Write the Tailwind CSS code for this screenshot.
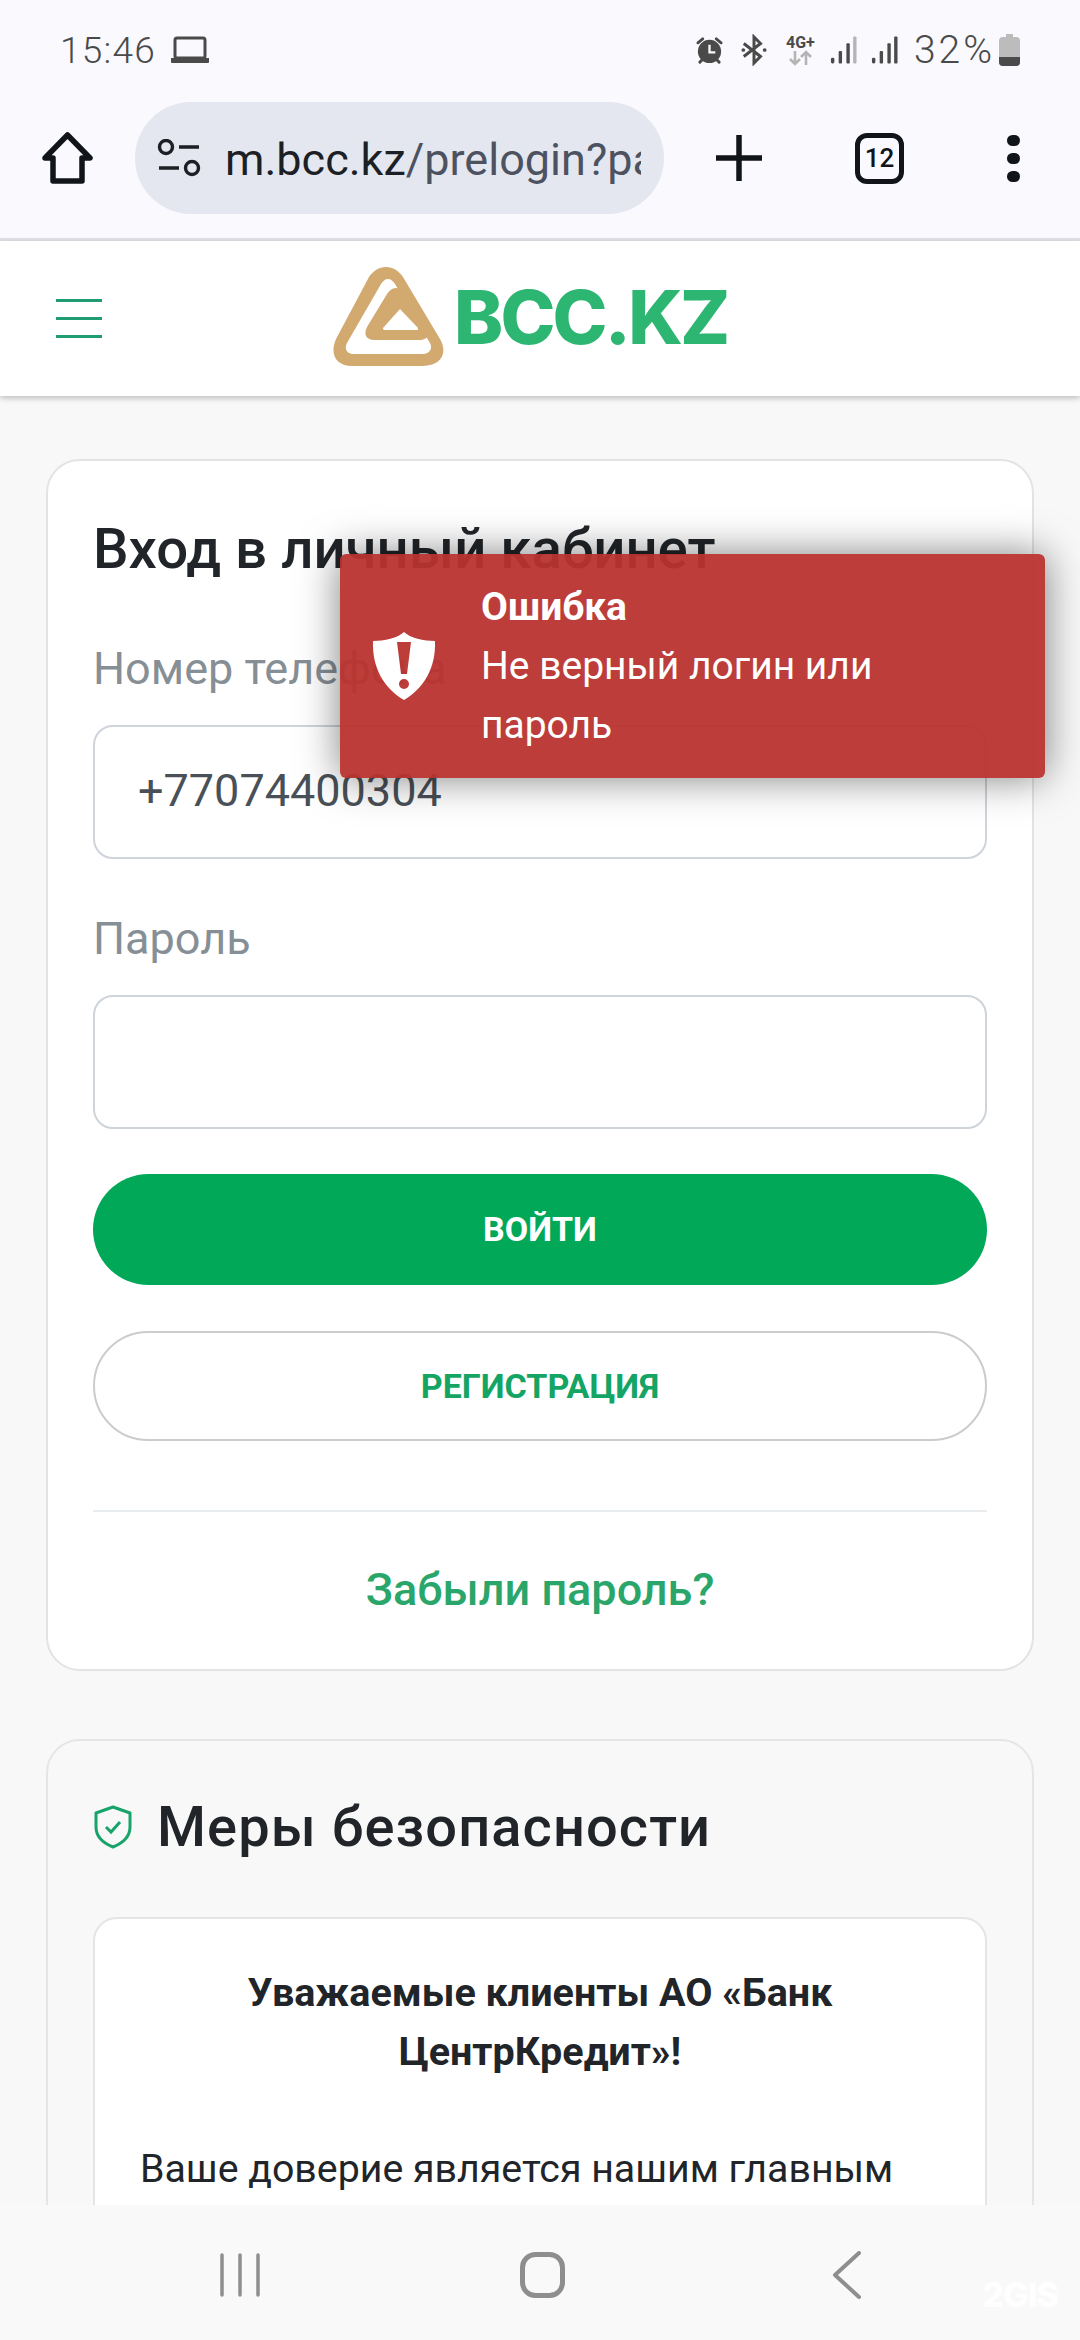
<!DOCTYPE html>
<html lang="ru">
<head>
<meta charset="utf-8">
<script src="https://cdn.jsdelivr.net/npm/@tailwindcss/browser@4"></script>
</head>
<body class="m-0">
<div class="relative w-[1080px] h-[2340px] overflow-hidden flex flex-col bg-[#f8f8f8] font-['Roboto',sans-serif]">
  <!-- status bar -->
  <div class="h-[90px] bg-[#f9f9fe] flex items-center justify-between pl-[60px] pr-[60px] pt-[10px] shrink-0 text-[#4a4a4a]">
    <div class="flex items-center gap-[14px]">
      <span class="text-[37px] font-light tracking-[1.2px] leading-none">15:46</span>
      <svg class="w-[40px] h-[28px]" viewBox="0 0 40 28"><rect x="5" y="2" width="30" height="20" rx="2" fill="none" stroke="#4a4a4a" stroke-width="3"/><path d="M1 22h38v4a1 1 0 0 1-1 1H2a1 1 0 0 1-1-1z" fill="#4a4a4a"/></svg>
    </div>
    <div class="flex items-center">
      <svg class="w-[29px] h-[31px] mr-[17px]" viewBox="0 0 30 30"><path d="M3 7l5-4M27 7l-5-4M5 27l3-3M25 27l-3-3" stroke="#4a4a4a" stroke-width="3" stroke-linecap="round"/><circle cx="15" cy="16" r="12" fill="#4a4a4a"/><path d="M15 9v8h6" fill="none" stroke="#f9f9fe" stroke-width="2.4"/></svg>
      <svg class="w-[26px] h-[32px] mr-[17px]" viewBox="0 0 28 32"><path d="M3 9l18 14-7 7V2l7 7L3 23" fill="none" stroke="#4a4a4a" stroke-width="3.2"/><circle cx="2.5" cy="16" r="2" fill="#4a4a4a"/><circle cx="25.5" cy="16" r="2" fill="#4a4a4a"/></svg>
      <div class="flex flex-col items-center w-[33px] mr-[13px]">
        <span class="text-[16px] font-bold leading-[15px] text-[#4a4a4a]">4G+</span>
        <svg class="w-[26px] h-[16px]" viewBox="0 0 26 16"><path d="M8 1v13M3 9l5 5 5-5M19 15V2M14 7l5-5 5 5" fill="none" stroke="#b5b5b5" stroke-width="2.6"/></svg>
      </div>
      <svg class="w-[27px] h-[30px] mr-[14px]" viewBox="0 0 28 30"><rect x="1" y="23" width="3.5" height="6" rx="1.5" fill="#4a4a4a"/><rect x="9" y="16" width="3.5" height="13" rx="1" fill="#4a4a4a"/><rect x="17" y="8" width="3.5" height="21" rx="1" fill="#4a4a4a"/><rect x="24" y="1" width="3.5" height="28" rx="1" fill="#b5b5b5"/></svg>
      <svg class="w-[27px] h-[30px] mr-[16px]" viewBox="0 0 28 30"><rect x="1" y="23" width="3.5" height="6" rx="1.5" fill="#4a4a4a"/><rect x="9" y="16" width="3.5" height="13" rx="1" fill="#4a4a4a"/><rect x="17" y="8" width="3.5" height="21" rx="1" fill="#4a4a4a"/><rect x="24" y="1" width="3.5" height="28" rx="1" fill="#4a4a4a"/></svg>
      <span class="text-[39px] font-light tracking-[3px] leading-none mr-[4px]">32%</span>
      <svg class="w-[21px] h-[32px]" viewBox="0 0 21 32"><path d="M7 0h7v3h3a4 4 0 0 1 4 4v21a4 4 0 0 1-4 4H4a4 4 0 0 1-4-4V7a4 4 0 0 1 4-4h3z" fill="#bcbcbc"/><path d="M0 23h21v5a4 4 0 0 1-4 4H4a4 4 0 0 1-4-4z" fill="#4a4a4a"/></svg>
    </div>
  </div>
  <!-- browser toolbar -->
  <div class="h-[151px] bg-[#f9f9fe] flex items-center shrink-0 border-b-[3px] border-[#e2e3e8] pb-[12px]">
    <svg class="ml-[41px] w-[53px] h-[52px] shrink-0" viewBox="0 0 53 52"><path d="M26.5 3L49 26H41V49H12V26H4z" fill="none" stroke="#111418" stroke-width="5.5" stroke-linejoin="round"/></svg>
    <div class="ml-[41px] w-[529px] h-[112px] rounded-[56px] bg-[#e4e7f0] flex items-center pl-[22px] shrink-0">
      <svg class="w-[44px] h-[38px] shrink-0" viewBox="0 0 44 38"><circle cx="9" cy="8" r="6.5" fill="none" stroke="#1c1f24" stroke-width="3.4"/><path d="M22 8h20M2 29h20" stroke="#1c1f24" stroke-width="3.4"/><circle cx="35" cy="29" r="6.5" fill="none" stroke="#1c1f24" stroke-width="3.4"/></svg>
      <div class="ml-[24px] w-[416px] overflow-hidden whitespace-nowrap text-[45px] leading-[60px] pt-[3px] text-[#4d5260]"><span class="text-[#1c1f24]">m.bcc.kz</span>/prelogin?pa</div>
    </div>
    <svg class="ml-[52px] w-[46px] h-[46px] shrink-0" viewBox="0 0 46 46"><path d="M23 0v46M0 23h46" stroke="#111418" stroke-width="5.5"/></svg>
    <div class="ml-[93px] w-[49px] h-[51px] rounded-[12px] border-[5px] border-[#111418] flex items-center justify-center text-[26px] font-medium text-[#111418] leading-none shrink-0">12</div>
    <div class="ml-[103px] flex flex-col gap-[7px] shrink-0">
      <span class="block w-[13px] h-[11px] rounded-full bg-[#111418]"></span>
      <span class="block w-[13px] h-[11px] rounded-full bg-[#111418]"></span>
      <span class="block w-[13px] h-[11px] rounded-full bg-[#111418]"></span>
    </div>
  </div>
  <!-- site nav -->
  <div class="relative h-[155px] bg-white flex items-center shrink-0 shadow-[0_2px_6px_rgba(0,0,0,0.25)] z-10">
    <div class="ml-[56px] flex flex-col gap-[15px] w-[46px]">
      <span class="block h-[3px] bg-[#1f9d70]"></span>
      <span class="block h-[3px] bg-[#1f9d70]"></span>
      <span class="block h-[3px] bg-[#1f9d70]"></span>
    </div>
    <div class="ml-[231px] -mt-[3px] flex items-center">
      <svg class="w-[111px] h-[100px] shrink-0" viewBox="0 0 111 100"><path fill-rule="evenodd" fill="#d2aa70" d="M53 0C60 0 66 4 70 10L107 72C116 88 106 99 90 99L19 99C4 99 -4 88 3 72L36 10C40 4 46 0 53 0ZM55 12C52 12 50 14 48 17L14 76C11 82 14 87 21 87L90 87C96 87 100 82 97 76L62 17C60 14 58 12 55 12Z"/><path fill-rule="evenodd" fill="#d2aa70" d="M63 21C67 21 70 24 72 27L93 60C98 68 94 73 87 73L41 73C34 73 30 68 34 60L54 27C56 24 59 21 63 21ZM67 42L50 61C50 63 51 63 52 63L84 63C85 63 85 62 85 61Z"/></svg>
      <span class="ml-[10px] text-[74px] font-extrabold text-[#2db672] leading-none font-['Inter',sans-serif] tracking-[-2.8px]">BCC.KZ</span>
    </div>
  </div>
  <!-- main -->
  <div class="flex-1 overflow-hidden px-[46px] pt-[63px]">
    <div class="bg-white border-2 border-[#e3e3e3] rounded-[34px] h-[1212px] px-[45px] pt-[58px]">
      <h1 class="text-[56.4px] font-medium text-[#212529] leading-[60px]">Вход в личный кабинет</h1>
      <div class="mt-[63px] text-[45px] text-[#868e96] leading-[54px]">Номер телефона</div>
      <div class="mt-[29px] h-[134px] border-2 border-[#ced4da] rounded-[20px] flex items-center pl-[43px] text-[45px] text-[#495057] pb-[2px]">+77074400304</div>
      <div class="mt-[53px] text-[45px] text-[#868e96] leading-[54px]">Пароль</div>
      <div class="mt-[29px] h-[134px] border-2 border-[#ced4da] rounded-[20px]"></div>
      <div class="mt-[45px] h-[111px] rounded-[56px] bg-[#00a858] flex items-center justify-center text-[34px] font-bold text-white">ВОЙТИ</div>
      <div class="mt-[46px] h-[110px] rounded-[55px] border-2 border-[#cccccc] flex items-center justify-center text-[34px] font-bold text-[#14a565]">РЕГИСТРАЦИЯ</div>
      <div class="mt-[69px] border-t-2 border-[#e9ecef]"></div>
      <div class="mt-[51px] text-center text-[45px] font-medium text-[#2aa66a] leading-[54px]">Забыли пароль?</div>
    </div>
    <div class="mt-[68px] border-2 border-[#e5e5e5] rounded-[34px] h-[600px] px-[45px] pt-[55px]">
      <div class="flex items-center">
        <svg class="w-[40px] h-[44px] shrink-0" viewBox="0 0 40 44"><path d="M20 2L37 8V22C37 32 30 38 20 42C10 38 3 32 3 22V8Z" fill="none" stroke="#17a36a" stroke-width="3" stroke-linejoin="round"/><path d="M13 22l5 5 9-10" fill="none" stroke="#17a36a" stroke-width="3"/></svg>
        <span class="ml-[24px] text-[56px] font-medium text-[#212529] leading-[62px] tracking-[1.1px]">Меры безопасности</span>
      </div>
      <div class="mt-[59px] bg-white border-2 border-[#e5e5e5] rounded-[24px] h-[500px] px-[45px] pt-[44px]">
        <p class="text-center text-[39.5px] font-bold text-[#212529] leading-[59px] px-[30px]">Уважаемые клиенты АО «Банк ЦентрКредит»!</p>
        <p class="mt-[59px] text-[39.3px] text-[#212529] leading-[59px]">Ваше доверие является нашим главным</p>
      </div>
    </div>
  </div>
  <!-- android nav -->
  <div class="relative h-[135px] bg-[#f9f9f9] shrink-0 z-10 flex items-center pt-[5px]">
    <svg class="ml-[220px] w-[40px] h-[44px] shrink-0" viewBox="0 0 40 44"><path d="M2 2v40M20 2v40M38 2v40" stroke="#8e8e8e" stroke-width="3.5" stroke-linecap="round"/></svg>
    <svg class="ml-[260px] w-[45px] h-[46px] shrink-0" viewBox="0 0 45 46"><rect x="2.5" y="2.5" width="40" height="41" rx="13" fill="none" stroke="#8e8e8e" stroke-width="5"/></svg>
    <svg class="ml-[267px] w-[30px] h-[48px] shrink-0" viewBox="0 0 30 48"><path d="M27 2L3 24L27 46" fill="none" stroke="#8e8e8e" stroke-width="4" stroke-linecap="round" stroke-linejoin="round"/></svg>
    <span class="absolute right-[22px] bottom-[28px] text-[34px] font-extrabold tracking-[-1px] leading-none text-white/90 font-['Inter',sans-serif]">2GIS</span>
  </div>
  <!-- toast -->
  <div class="absolute left-[340px] top-[554px] w-[705px] h-[224px] z-20 rounded-[6px] bg-[#b8332e]/95 shadow-[0_0_40px_rgba(0,0,0,0.5)]">
    <svg class="absolute left-[32px] top-[78px] w-[64px] h-[68px]" viewBox="0 0 64 68"><path fill-rule="evenodd" fill="#fff" d="M32 0C38 6 52 9 63 9C64 36 52 56 32 68C12 56 0 36 1 9C12 9 26 6 32 0ZM25 10L29 42H35L39 10ZM32 47A5 5 0 1 0 32 57A5 5 0 1 0 32 47Z"/></svg>
    <div class="ml-[141px] pt-[31px] text-white text-[39px] leading-[59px]">
      <div class="font-bold leading-[44px]">Ошибка</div>
      <div class="mt-[8px] w-[480px]">Не верный логин или пароль</div>
    </div>
  </div>
</div>
</body>
</html>
